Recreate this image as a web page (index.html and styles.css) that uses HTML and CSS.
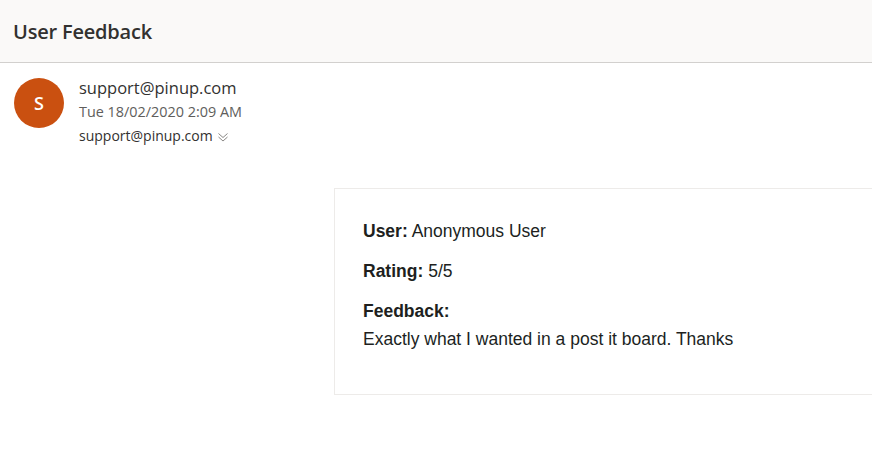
FILE: index.html
```html
<!DOCTYPE html>
<html>
<head>
<meta charset="utf-8">
<link rel="stylesheet" href="styles.css">
</head>
<body>
<header class="topbar">
  <h1 class="title">User Feedback</h1>
</header>
<section class="message">
  <div class="sender">
    <div class="avatar">S</div>
    <div class="meta">
      <div class="from">support@pinup.com</div>
      <div class="date">Tue 18/02/2020 2:09 AM</div>
      <div class="to">support@pinup.com
        <svg class="chev" width="12" height="10" viewBox="0 0 12 10"><path d="M1.5 1.5 L6 5.5 L10.5 1.5 M1.5 5 L6 9 L10.5 5" fill="none" stroke="#8a8886" stroke-width="1"/></svg>
      </div>
    </div>
  </div>
  <div class="body-row">
    <div class="card">
      <p class="line"><b>User:</b> Anonymous User</p>
      <p class="line"><b>Rating:</b> 5/5</p>
      <p class="line"><b>Feedback:</b><br>Exactly what I wanted in a post it board. Thanks</p>
    </div>
  </div>
</section>
</body>
</html>
```
FILE: styles.css
```css
* { box-sizing: border-box; }
html, body { margin: 0; padding: 0; background: #ffffff; }
body { font-family: "Open Sans", "Noto Sans", sans-serif; color: #323130; width: 872px; height: 465px; overflow: hidden; }
.topbar {
  height: 63px;
  background: #faf9f8;
  border-bottom: 1px solid #d2d0ce;
  display: flex;
  align-items: center;
  padding-left: 13px;
  padding-top: 1px;
}
.title { margin: 0; font-size: 20px; font-weight: 600; color: #323130; letter-spacing: -0.2px; }
.message { padding-top: 15px; }
.sender { display: flex; padding-left: 14px; gap: 15px; }
.avatar {
  width: 50px; height: 50px; border-radius: 50%;
  background: #ca5010; color: #fff;
  display: flex; align-items: center; justify-content: center;
  font-size: 18px; font-weight: 600;
}
.meta { display: flex; flex-direction: column; }
.from { font-size: 16.5px; line-height: 20px; color: #323130; margin-top: 0; }
.date { font-size: 14.4px; line-height: 20px; color: #605e5c; margin-top: 4px; }
.to { font-size: 14px; line-height: 20px; color: #323130; margin-top: 4px; display: flex; align-items: center; gap: 4px; }
.chev { margin-top: 1px; }
.body-row { display: flex; justify-content: flex-end; margin-top: 42px; }
.card {
  width: 538px;
  height: 207px;
  border: 1px solid #edebe9;
  border-right: none;
  padding: 28px 28px;
  font-family: "Liberation Sans", Arial, sans-serif;
  font-size: 17.5px;
  color: #201f1e;
}
.line { margin: 0 0 12px 0; line-height: 28px; }
.line b { font-weight: 700; }
```
